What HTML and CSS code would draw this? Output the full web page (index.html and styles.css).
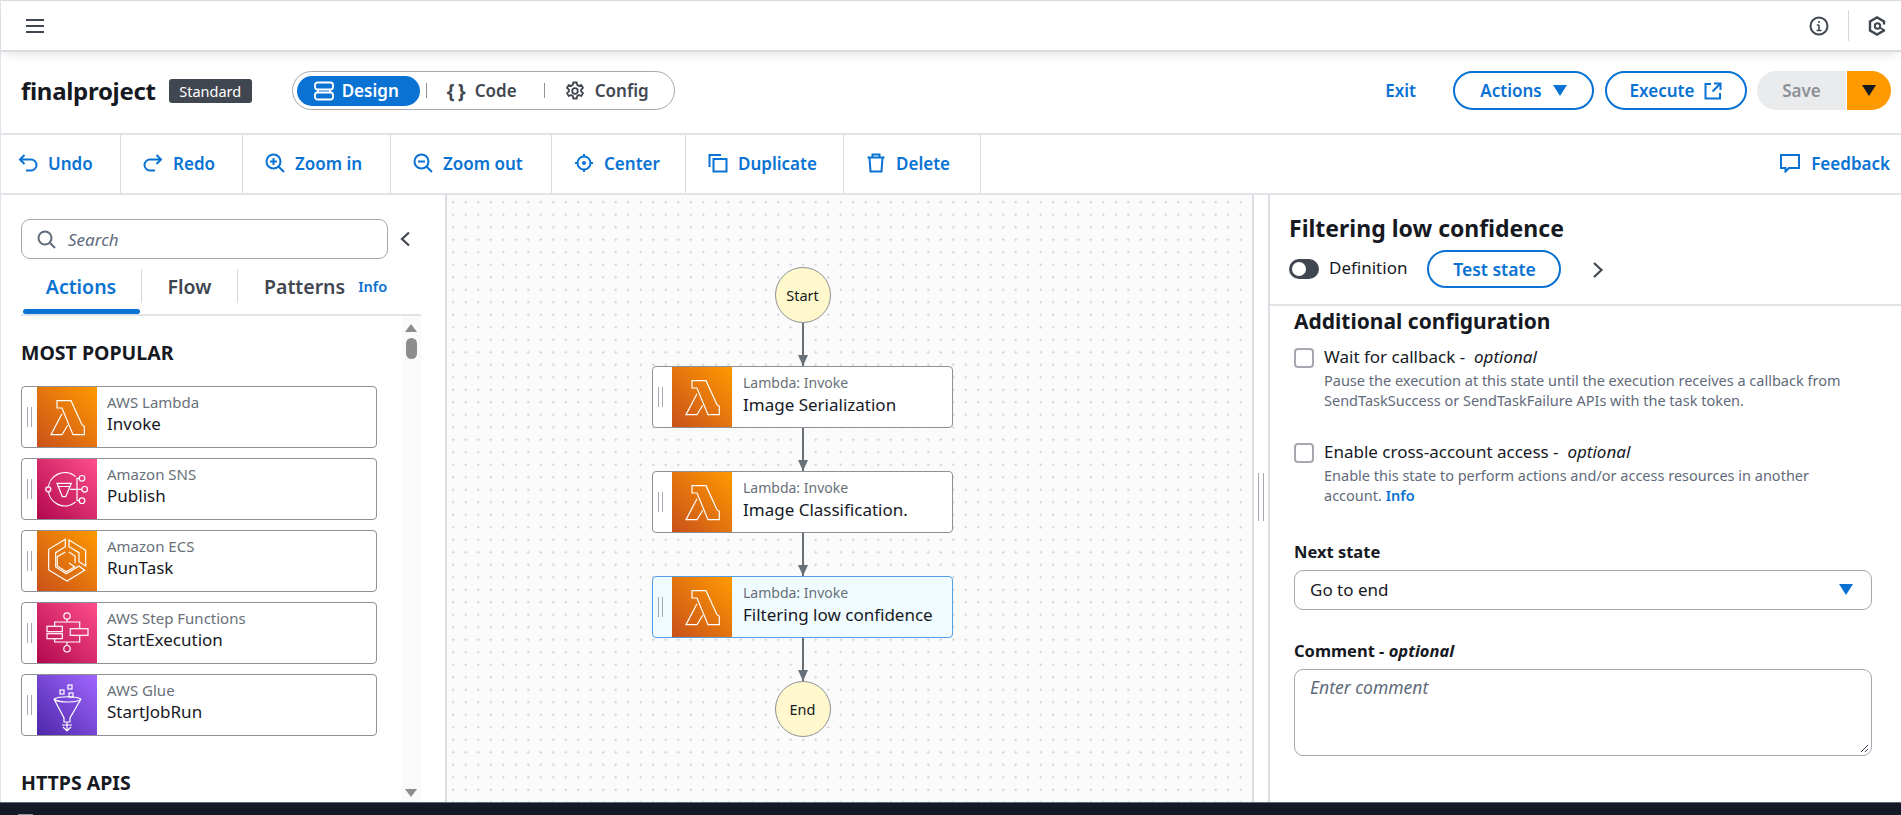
FILE: index.html
```html
<!DOCTYPE html>
<html lang="en">

<head>
    <meta charset="UTF-8">
    <title>finalproject - Step Functions</title>
    <link rel="stylesheet" href="styles.css">
</head>

<body>
    <svg class="sprites" width="0" height="0">
        <symbol id="lambda" viewBox="0 0 60 60">
            <path d="M20 13.700h14l11 24 2.300 1.600v8.400H36L25 21h-5z M25 26.700L14 47.700h11l5.700-9.400" fill="none" stroke="#fff" stroke-width="1.200" />
        </symbol>
    </svg>

    <div class="page">
        <div class="topnav">
            <svg class="hamburger" width="18" height="16" viewBox="0 0 18 16"><path d="M0 2h18M0 8h18M0 14h18" stroke="#414750" stroke-width="2.200" /></svg>
            <div class="topnav-right">
                <svg width="20" height="20" viewBox="0 0 20 20" fill="none" stroke="#414750" stroke-width="2"><circle cx="10" cy="10" r="8.500" /><path d="M10 9v5M7.500 14.500h5M7.800 9H10" stroke-width="1.600" /><circle cx="10" cy="6" r="1" fill="#414750" stroke="none" /></svg>
                <span class="topnav-divider"></span>
                <svg width="18" height="20" viewBox="0 0 18 20" fill="none" stroke="#414750" stroke-width="2.400"><path d="M16 13.500v1L9 18.500l-7-4v-9l7-4 7 4v3" /><circle cx="9.500" cy="10" r="2.700" stroke-width="2" /><path d="M11.500 11.500L16 14" stroke-width="2" /></svg>
            </div>
        </div>

        <div class="header">
            <h1 class="project-name">finalproject</h1>
            <span class="badge">Standard</span>
            <div class="segmented">
                <button class="seg seg-active">
                    <svg width="20" height="20" viewBox="0 0 20 20" fill="none" stroke="#fff" stroke-width="1.800"><rect x="1" y="1.500" width="18" height="7" rx="2.500" /><rect x="1" y="11.500" width="18" height="7" rx="2.500" /><path d="M4 8.500v3M16 8.500v3" /></svg>
                    Design
                </button>
                <span class="seg-divider"></span>
                <button class="seg seg-code"><span class="braces">{ }</span> Code</button>
                <span class="seg-divider"></span>
                <button class="seg seg-config">
                    <svg width="20" height="20" viewBox="0 0 20 20" fill="none" stroke="#414750" stroke-width="1.800"><path d="M8.300 1.500h3.400l.5 2.500 1.700.9 2.400-.9 1.700 2.900-1.900 1.700v1.800l1.900 1.700-1.700 2.900-2.400-.9-1.700.9-.5 2.500H8.300l-.5-2.500-1.700-.9-2.400.9-1.700-2.900 1.900-1.700V8.600L2 6.900l1.700-2.900 2.400.9 1.700-.9z" /><circle cx="10" cy="10" r="2.800" /></svg>
                    Config
                </button>
            </div>
            <div class="header-actions">
                <a class="exit-link">Exit</a>
                <button class="btn-outline btn-actions">Actions <span class="caret"></span></button>
                <button class="btn-outline btn-execute">Execute
                    <svg width="18" height="18" viewBox="0 0 18 18" fill="none" stroke="#0972d3" stroke-width="2"><path d="M7 2H1.500v14.500H16V11M10 1.500h6.500V8M16 2l-7.500 7.500" /></svg>
                </button>
                <div class="save-group">
                    <button class="btn-save">Save</button>
                    <button class="btn-save-arrow"><span class="caret caret-dark"></span></button>
                </div>
            </div>
        </div>

        <div class="toolbar">
            <button class="tool tool-undo">
                <svg width="20" height="20" viewBox="0 0 20 20" fill="none" stroke="#0972d3" stroke-width="2"><path d="M6.500 2L2 6.500 6.500 11M2 6.500h11a5 5 0 0 1 0 11H8" /></svg>
                Undo
            </button>
            <button class="tool tool-redo">
                <svg width="20" height="20" viewBox="0 0 20 20" fill="none" stroke="#0972d3" stroke-width="2"><path d="M13.500 2L18 6.500 13.500 11M18 6.500H7a5 5 0 0 0 0 11h5" /></svg>
                Redo
            </button>
            <button class="tool tool-zoomin">
                <svg width="20" height="20" viewBox="0 0 20 20" fill="none" stroke="#0972d3" stroke-width="2"><circle cx="8.500" cy="8.500" r="7" /><path d="M13.500 13.500L19 19M8.500 5v7M5 8.500h7" /></svg>
                Zoom in
            </button>
            <button class="tool tool-zoomout">
                <svg width="20" height="20" viewBox="0 0 20 20" fill="none" stroke="#0972d3" stroke-width="2"><circle cx="8.500" cy="8.500" r="7" /><path d="M13.500 13.500L19 19M5 8.500h7" /></svg>
                Zoom out
            </button>
            <button class="tool tool-center">
                <svg width="20" height="20" viewBox="0 0 20 20" fill="none" stroke="#0972d3" stroke-width="2"><circle cx="10" cy="10" r="6.500" /><circle cx="10" cy="10" r="2" fill="#0972d3" stroke="none" /><path d="M10 1v2.500M10 16.500V19M1 10h2.500M16.500 10H19" /></svg>
                Center
            </button>
            <button class="tool tool-duplicate">
                <svg width="20" height="20" viewBox="0 0 20 20" fill="none" stroke="#0972d3" stroke-width="2"><path d="M1.500 14V2H13" /><rect x="5.500" y="6" width="13" height="12.500" /></svg>
                Duplicate
            </button>
            <button class="tool tool-delete">
                <svg width="20" height="20" viewBox="0 0 20 20" fill="none" stroke="#0972d3" stroke-width="2"><path d="M1.500 4.500h17M6.500 4.500V1.500h7v3M3.500 4.500l1 14h11l1-14" /></svg>
                Delete
            </button>
            <button class="tool-feedback">
                <svg width="20" height="20" viewBox="0 0 20 20" fill="none" stroke="#0972d3" stroke-width="2"><path d="M1 2h18v13H9l-3.500 3.500V15H1z" /></svg>
                Feedback
            </button>
        </div>

        <div class="main">
            <div class="left-panel">
                <div class="search-row">
                    <div class="search-box">
                        <svg width="19" height="19" viewBox="0 0 19 19" fill="none" stroke="#5f6b7a" stroke-width="2"><circle cx="8" cy="8" r="6.500" /><path d="M12.800 12.800L18 18" /></svg>
                        <span class="search-text">Search</span>
                    </div>
                    <svg class="collapse" width="12" height="16" viewBox="0 0 12 16" fill="none" stroke="#414750" stroke-width="2.200"><path d="M10 1.500L3 8l7 6.500" /></svg>
                </div>
                <div class="tabs">
                    <div class="tab tab-active">Actions</div>
                    <div class="tab tab-flow">Flow</div>
                    <div class="tab tab-patterns">Patterns <span class="info-link">Info</span></div>
                </div>
                <div class="list-area">
                    <div class="action-list">
                        <h3 class="list-title">MOST POPULAR</h3>
                        <div class="action-card">
                            <span class="grip"></span>
                            <span class="icon icon-orange"><svg width="60" height="60"><use href="#lambda" /></svg></span>
                            <div class="card-text"><span class="card-service">AWS Lambda</span><span class="card-name">Invoke</span></div>
                        </div>
                        <div class="action-card">
                            <span class="grip"></span>
                            <span class="icon icon-pink">
                                <svg width="60" height="60" viewBox="0 0 60 60" fill="none" stroke="#fff" stroke-width="1.200"><path d="M38.500 17.500A16.500 16.500 0 0 0 11.300 30.300 16.500 16.500 0 0 0 38.500 43" /><circle cx="11.300" cy="30.300" r="2.500" fill="#e0296a" /><circle cx="45" cy="19.300" r="2.800" /><circle cx="47.700" cy="30.300" r="2.800" /><circle cx="45" cy="41.700" r="2.800" /><path d="M20 24.300h14.300l-5.600 13.400h-3.400z M21 27.500h12.500" /><path d="M33 30.300h11.900M42.200 19.300H40V41.700h2.200" /></svg>
                            </span>
                            <div class="card-text"><span class="card-service">Amazon SNS</span><span class="card-name">Publish</span></div>
                        </div>
                        <div class="action-card">
                            <span class="grip"></span>
                            <span class="icon icon-orange">
                                <svg width="60" height="60" viewBox="0 0 60 60" fill="none" stroke="#fff" stroke-width="1.200"><path d="M28.300 8.300L11.700 18.300V39L30 50l17.700-10.700L42 35l-12.700 7.700L18.700 36V21.700l9.600-6z" /><path d="M32 9l16.700 10.300V35L42 30.700v-9l-10-6z" /><path d="M28.300 21l-8 4.700V35l9 5.700 8.400-5-5.700-3.700" /><path d="M32 21l6 4v7" /></svg>
                            </span>
                            <div class="card-text"><span class="card-service">Amazon ECS</span><span class="card-name">RunTask</span></div>
                        </div>
                        <div class="action-card">
                            <span class="grip"></span>
                            <span class="icon icon-pink">
                                <svg width="60" height="60" viewBox="0 0 60 60" fill="none" stroke="#fff" stroke-width="1.200"><circle cx="30" cy="13" r="3.200" /><circle cx="30" cy="45.700" r="3.200" /><path d="M30 16.200V19M30 39v3.500M17.700 23.300V19h25v6.700M17.700 35.700V39h25v-6.700" /><rect x="10" y="23.300" width="15.300" height="5.400" /><rect x="10" y="30.700" width="15.300" height="5" /><rect x="33.300" y="25.700" width="17.700" height="6.600" /></svg>
                            </span>
                            <div class="card-text"><span class="card-service">AWS Step Functions</span><span class="card-name">StartExecution</span></div>
                        </div>
                        <div class="action-card">
                            <span class="grip"></span>
                            <span class="icon icon-purple">
                                <svg width="60" height="60" viewBox="0 0 60 60" fill="none" stroke="#fff" stroke-width="1.200"><rect x="31" y="10" width="4" height="4" /><rect x="23" y="15" width="4" height="4" /><rect x="32" y="18" width="4" height="4" /><path d="M17 24c4 4 24 4 27 0L33 43v4h-6v-4z" /><path d="M17 24c6-3 21-3 27 0" /><path d="M30 47v8M26 52l4 4 4-4M25 50h10" /></svg>
                            </span>
                            <div class="card-text"><span class="card-service">AWS Glue</span><span class="card-name">StartJobRun</span></div>
                        </div>
                        <h3 class="list-title list-title-next">HTTPS APIS</h3>
                    </div>
                    <div class="scrollbar">
                        <span class="scroll-up"></span>
                        <span class="scroll-thumb"></span>
                        <span class="scroll-down"></span>
                    </div>
                </div>
            </div>

            <div class="canvas">
                <div class="graph">
                    <div class="terminal">Start</div>
                    <div class="arrow"></div>
                    <div class="state">
                        <span class="grip"></span>
                        <span class="icon icon-orange"><svg width="60" height="60"><use href="#lambda" /></svg></span>
                        <div class="card-text"><span class="card-service">Lambda: Invoke</span><span class="card-name">Image Serialization</span></div>
                    </div>
                    <div class="arrow"></div>
                    <div class="state">
                        <span class="grip"></span>
                        <span class="icon icon-orange"><svg width="60" height="60"><use href="#lambda" /></svg></span>
                        <div class="card-text"><span class="card-service">Lambda: Invoke</span><span class="card-name">Image Classification.</span></div>
                    </div>
                    <div class="arrow"></div>
                    <div class="state state-selected">
                        <span class="grip"></span>
                        <span class="icon icon-orange"><svg width="60" height="60"><use href="#lambda" /></svg></span>
                        <div class="card-text"><span class="card-service">Lambda: Invoke</span><span class="card-name">Filtering low confidence</span></div>
                    </div>
                    <div class="arrow"></div>
                    <div class="terminal">End</div>
                </div>
            </div>

            <div class="splitter"><span class="grip grip-tall"></span></div>

            <div class="right-panel">
                <div class="panel-head">
                    <h2 class="panel-title">Filtering low confidence</h2>
                    <div class="panel-controls">
                        <span class="toggle"><span class="toggle-knob"></span></span>
                        <span class="toggle-label">Definition</span>
                        <button class="btn-outline btn-test">Test state</button>
                        <svg class="panel-chevron" width="12" height="18" viewBox="0 0 12 18" fill="none" stroke="#414750" stroke-width="2.200"><path d="M2 2l7.500 7L2 16" /></svg>
                    </div>
                </div>
                <div class="panel-body">
                    <h3 class="section-title">Additional configuration</h3>
                    <div class="check-row">
                        <span class="checkbox"></span>
                        <div>
                            <div class="check-label">Wait for callback - <i>&nbsp;optional</i></div>
                            <div class="check-desc">Pause the execution at this state until the execution receives a callback from<br>SendTaskSuccess or SendTaskFailure APIs with the task token.</div>
                        </div>
                    </div>
                    <div class="check-row">
                        <span class="checkbox"></span>
                        <div>
                            <div class="check-label">Enable cross-account access - <i>&nbsp;optional</i></div>
                            <div class="check-desc">Enable this state to perform actions and/or access resources in another<br>account. <b class="info-link">Info</b></div>
                        </div>
                    </div>
                    <div class="field field-next">
                        <label class="field-label">Next state</label>
                        <div class="select">Go to end <span class="caret"></span></div>
                    </div>
                    <div class="field field-comment">
                        <label class="field-label">Comment - <i>optional</i></label>
                        <div class="textarea">
                            <span class="placeholder">Enter comment</span>
                            <svg class="resize-mark" width="9" height="9" viewBox="0 0 9 9" stroke="#414750" stroke-width="1"><path d="M1 8l7-7M5 8l3-3" /></svg>
                        </div>
                    </div>
                </div>
            </div>
        </div>

        <div class="footer"><span class="footer-mark"></span></div>
    </div>
</body>

</html>
```

FILE: styles.css
```css
* {
    box-sizing: border-box;
}

body {
    margin: 0;
    overflow: hidden;
    font-family: "Noto Sans", "Open Sans", Arial, sans-serif;
    color: #16191f;
    background-color: white;
}

button {
    font-family: inherit;
    cursor: pointer;
}

h1, h2, h3 {
    margin: 0;
}

.sprites {
    position: absolute;
}

.page {
    display: flex;
    flex-direction: column;
    height: 815px;
    border-left: 1px solid #e1e3e8;
}

/* top nav */
.topnav {
    position: relative;
    z-index: 2;
    display: flex;
    align-items: center;
    justify-content: space-between;
    height: 52px;
    padding: 0 15px 0 25px;
    border-top: 1px solid #d9dbe0;
    border-bottom: 2px solid #dcdde2;
    background-color: white;
    box-shadow: 0 6px 10px -4px rgba(0, 0, 0, 0.12);
}

.topnav-right {
    display: flex;
    align-items: center;
}

.topnav-divider {
    width: 1px;
    height: 31px;
    margin: 0 19px;
    background-color: #d5d7dc;
}

/* header */
.header {
    display: flex;
    align-items: center;
    height: 83px;
    padding: 0 10px 4px 20px;
    border-bottom: 2px solid #e2e3e8;
}

.project-name {
    font-size: 24px;
    font-weight: 700;
    letter-spacing: -0.3px;
}

.badge {
    width: 83px;
    margin-left: 13px;
    padding: 2px 0;
    background-color: #414750;
    color: white;
    font-size: 14.500px;
    text-align: center;
    border-radius: 3px;
}

.segmented {
    display: flex;
    align-items: center;
    width: 383px;
    height: 39px;
    margin-left: 40px;
    padding: 0 4px;
    border: 1px solid #a5a8ae;
    border-radius: 20px;
}

.seg {
    display: flex;
    align-items: center;
    gap: 10px;
    height: 30px;
    padding: 0;
    border: none;
    background: none;
    color: #414750;
    font-size: 17px;
    font-weight: 600;
}

.seg-active {
    justify-content: center;
    gap: 8px;
    width: 123px;
    padding-right: 4px;
    background-color: #0972d3;
    color: white;
    border-radius: 15px;
}

.seg-divider {
    width: 1px;
    height: 15px;
    margin-left: 6px;
    background-color: #8d9096;
}

.seg-code {
    width: 111px;
    padding-left: 20px;
}

.seg-config {
    padding-left: 20px;
}

.braces {
    font-size: 20px;
    font-weight: 700;
    letter-spacing: -1px;
}

.header-actions {
    display: flex;
    align-items: center;
    margin-left: auto;
}

.exit-link {
    margin-right: 37px;
    color: #0972d3;
    font-size: 17px;
    font-weight: 600;
}

.btn-outline {
    display: flex;
    align-items: center;
    justify-content: center;
    height: 39px;
    padding: 0;
    border: 2px solid #0972d3;
    border-radius: 20px;
    background-color: white;
    color: #0972d3;
    font-size: 17px;
    font-weight: 600;
}

.btn-actions {
    gap: 11px;
    width: 141px;
    margin-right: 11px;
}

.btn-execute {
    gap: 10px;
    width: 142px;
    margin-right: 10px;
}

.caret {
    width: 0;
    height: 0;
    border-left: 7px solid transparent;
    border-right: 7px solid transparent;
    border-top: 11px solid #0972d3;
}

.caret-dark {
    display: block;
    border-top-color: #16191f;
}

.save-group {
    display: flex;
    height: 39px;
}

.btn-save {
    width: 89px;
    border: none;
    border-radius: 20px 0 0 20px;
    background-color: #e9ebed;
    color: #8d9096;
    font-size: 17px;
    font-weight: 600;
}

.btn-save-arrow {
    display: flex;
    align-items: center;
    justify-content: center;
    width: 44px;
    margin-left: 1px;
    padding: 0;
    border: none;
    border-radius: 0 20px 20px 0;
    background-color: #ff9900;
}

/* toolbar */
.toolbar {
    display: flex;
    align-items: stretch;
    height: 60px;
    border-bottom: 2px solid #e2e3e8;
}

.tool {
    display: flex;
    align-items: center;
    gap: 10px;
    padding: 0 0 2px 22px;
    border: none;
    border-right: 1px solid #d9dbe0;
    background: none;
    color: #0972d3;
    font-size: 17px;
    font-weight: 600;
}

.tool-undo {
    width: 120px;
    padding-left: 17px;
}

.tool-redo {
    width: 122px;
}

.tool-zoomin {
    width: 148px;
}

.tool-zoomout {
    width: 161px;
}

.tool-center {
    width: 134px;
}

.tool-duplicate {
    width: 158px;
}

.tool-delete {
    width: 137px;
}

.tool-feedback {
    display: flex;
    align-items: center;
    gap: 11px;
    margin-left: auto;
    padding: 0 11px 2px 0;
    border: none;
    background: none;
    color: #0972d3;
    font-size: 17px;
    font-weight: 600;
}

/* main */
.main {
    display: flex;
    flex: 1;
    min-height: 0;
}

.left-panel {
    display: flex;
    flex-direction: column;
    flex: none;
    width: 446px;
    padding: 24px 24px 0 20px;
    border-right: 2px solid #dcdde2;
}

.search-row {
    display: flex;
    align-items: center;
}

.search-box {
    display: flex;
    align-items: center;
    gap: 12px;
    width: 367px;
    height: 40px;
    padding-left: 15px;
    border: 1px solid #a5a8ae;
    border-radius: 9px;
}

.search-text {
    color: #5f6b7a;
    font-size: 17px;
    font-style: italic;
}

.collapse {
    margin-left: 11px;
}

.tabs {
    display: flex;
    align-items: center;
    height: 57px;
    padding-bottom: 1px;
    border-bottom: 2px solid #e2e3e8;
}

.tab {
    display: flex;
    align-items: center;
    justify-content: center;
    position: relative;
    height: 34px;
    border-right: 1px solid #d5d7dc;
    color: #414750;
    font-size: 19.500px;
    font-weight: 600;
}

.tab-active {
    width: 121px;
    color: #0972d3;
}

.tab-active::after {
    content: "";
    position: absolute;
    left: 2px;
    right: 1px;
    bottom: -11px;
    height: 5px;
    border-radius: 3px;
    background-color: #0972d3;
}

.tab-flow {
    width: 96px;
}

.tab-patterns {
    gap: 13px;
    padding-left: 26px;
    border-right: none;
}

.info-link {
    color: #0972d3;
    font-size: 14.500px;
    font-weight: 600;
}

.list-area {
    display: flex;
    flex: 1;
    min-height: 0;
    justify-content: space-between;
}

.action-list {
    width: 356px;
}

.list-title {
    margin-top: 25px;
    margin-bottom: 21px;
    font-size: 19.500px;
    line-height: 24px;
    font-weight: 700;
}

.list-title-next {
    margin-top: 35px;
}

.action-card,
.state {
    display: flex;
    align-items: stretch;
    height: 62px;
    margin-bottom: 10px;
    border: 1px solid #8d9096;
    border-radius: 4px;
    background-color: white;
    overflow: hidden;
}

.grip {
    flex: none;
    width: 5px;
    height: 20px;
    margin: 20px 5px 0 5px;
    border-left: 1px solid #a5a8ae;
    border-right: 1px solid #a5a8ae;
}

.state .grip {
    margin-right: 9px;
}

.icon {
    flex: none;
    display: block;
    width: 60px;
    height: 60px;
}

.icon svg {
    display: block;
}

.icon-orange {
    background: linear-gradient(45deg, #c8511b, #ff9900);
}

.icon-pink {
    background: linear-gradient(45deg, #b0084d, #ff4f8b);
}

.icon-purple {
    background: linear-gradient(45deg, #4d27a8, #a166ff);
}

.card-text {
    display: flex;
    flex-direction: column;
    justify-content: center;
    padding: 0 0 8px 10px;
}

.state .card-text {
    padding: 0 0 6px 11px;
}

.card-service {
    color: #687078;
    font-size: 15px;
    line-height: 22px;
}

.state .card-service {
    font-size: 14px;
}

.card-name {
    color: #16191f;
    font-size: 17px;
    line-height: 22px;
}

.scrollbar {
    position: relative;
    width: 19px;
    background-color: #fafafa;
}

.scroll-up,
.scroll-down {
    position: absolute;
    left: 3px;
    width: 0;
    height: 0;
    border-left: 6px solid transparent;
    border-right: 6px solid transparent;
}

.scroll-up {
    top: 8px;
    border-bottom: 8px solid #8d8d8d;
}

.scroll-down {
    bottom: 5px;
    border-top: 8px solid #8d8d8d;
}

.scroll-thumb {
    position: absolute;
    top: 22px;
    left: 4px;
    width: 11px;
    height: 21px;
    border-radius: 6px;
    background-color: #8d8d8d;
}

/* canvas */
.canvas {
    flex: 1;
    min-width: 0;
    background-color: #fbfbfb;
    background-image: radial-gradient(circle, #d5d5d5 1px, transparent 1.300px);
    background-size: 12.500px 12.500px;
    background-position: 0 1px;
}

.graph {
    display: flex;
    flex-direction: column;
    align-items: center;
    width: 301px;
    margin-left: 205px;
    padding-top: 72px;
}

.terminal {
    display: flex;
    align-items: center;
    justify-content: center;
    flex: none;
    width: 56px;
    height: 56px;
    border: 1px solid #8d9096;
    border-radius: 50%;
    background-color: #fff8cc;
    font-size: 14.500px;
}

.arrow {
    position: relative;
    flex: none;
    width: 2px;
    height: 43px;
    background-color: #687078;
}

.arrow::after {
    content: "";
    position: absolute;
    left: -4px;
    bottom: 0;
    width: 0;
    height: 0;
    border-left: 5px solid transparent;
    border-right: 5px solid transparent;
    border-top: 11px solid #687078;
}

.state {
    flex: none;
    width: 301px;
    margin-bottom: 0;
}

.state-selected {
    border-color: #539fe5;
    background-color: #f0fbff;
}

/* splitter */
.splitter {
    display: flex;
    justify-content: center;
    flex: none;
    width: 18px;
    border-left: 2px solid #dcdde2;
    border-right: 2px solid #dcdde2;
}

.grip-tall {
    width: 6px;
    height: 48px;
    margin: 278px 0 0;
}

/* right panel */
.right-panel {
    flex: none;
    width: 631px;
}

.panel-head {
    height: 111px;
    padding: 17px 0 0 19px;
    border-bottom: 2px solid #e2e3e8;
}

.panel-title {
    font-size: 23px;
    line-height: 32px;
    font-weight: 700;
}

.panel-controls {
    display: flex;
    align-items: center;
    margin-top: 6px;
}

.toggle {
    display: block;
    position: relative;
    width: 30px;
    height: 20px;
    border-radius: 10px;
    background-color: #414750;
}

.toggle-knob {
    position: absolute;
    top: 3px;
    left: 3px;
    width: 14px;
    height: 14px;
    border-radius: 50%;
    background-color: white;
}

.toggle-label {
    margin-left: 10px;
    margin-bottom: 4px;
    color: #16191f;
    font-size: 17px;
}

.btn-test {
    width: 134px;
    height: 38px;
    margin-left: 20px;
    font-size: 17.500px;
}

.panel-chevron {
    margin-left: 31px;
    margin-top: 2px;
}

.panel-body {
    padding: 0 29px 0 24px;
}

.section-title {
    margin-top: 1px;
    margin-bottom: 13px;
    font-size: 21px;
    line-height: 28px;
    font-weight: 700;
}

.check-row {
    display: flex;
    height: 95px;
}

.checkbox {
    flex: none;
    width: 20px;
    height: 20px;
    margin: 0 10px 0 0;
    border: 2px solid #a5a8ae;
    border-radius: 4px;
}

.check-label {
    margin-top: -3px;
    font-size: 17px;
    line-height: 24px;
}

.check-desc {
    margin-top: 1px;
    color: #5f6b7a;
    font-size: 14.500px;
    line-height: 20px;
}

.field-next {
    margin-top: 4px;
}

.field-comment {
    margin-top: 31px;
}

.field-label {
    display: block;
    margin-bottom: 8px;
    font-size: 16.500px;
    line-height: 20px;
    font-weight: 700;
}

.select {
    display: flex;
    align-items: center;
    justify-content: space-between;
    height: 40px;
    padding: 0 18px 2px 15px;
    border: 1px solid #a5a8ae;
    border-radius: 9px;
    font-size: 17px;
}

.textarea {
    position: relative;
    height: 87px;
    padding: 5px 15px;
    border: 1px solid #a5a8ae;
    border-radius: 9px;
}

.placeholder {
    color: #5f6b7a;
    font-size: 17.500px;
    font-style: italic;
}

.resize-mark {
    position: absolute;
    right: 2px;
    bottom: 2px;
}

.footer {
    flex: none;
    height: 13px;
    margin-left: -1px;
    padding: 11px 0 0 18px;
    border-top: 1px solid #5f6b7a;
    background-color: #131a26;
}

.footer-mark {
    display: block;
    width: 15px;
    height: 1px;
    background-color: #8d9096;
}
```
